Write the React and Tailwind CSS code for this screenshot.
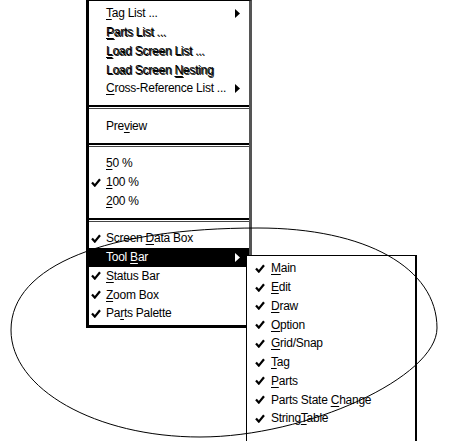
import React from 'react';

const mainGroups = [
  [
    { label: 'Tag List ...', arrow: true },
    { label: 'Parts List ...', dim: true },
    { label: 'Load Screen List ...', dim: true },
    { label: 'Load Screen Nesting', keyAt: 12, dim: true },
    { label: 'Cross-Reference List ...', arrow: true },
  ],
  [{ label: 'Preview', keyAt: 3 }],
  [
    { label: '50 %' },
    { label: '100 %', checked: true },
    { label: '200 %' },
  ],
  [
    { label: 'Screen Data Box', keyAt: 7, checked: true },
    { label: 'Tool Bar', keyAt: 5, active: true, arrow: true },
    { label: 'Status Bar', checked: true },
    { label: 'Zoom Box', checked: true },
    { label: 'Parts Palette', keyAt: 2, checked: true },
  ],
];

const toolBarItems = [
  { label: 'Main' },
  { label: 'Edit' },
  { label: 'Draw' },
  { label: 'Option' },
  { label: 'Grid/Snap' },
  { label: 'Tag' },
  { label: 'Parts' },
  { label: 'Parts State Change', keyAt: 12 },
  { label: 'StringTable', keyAt: 6 },
];

function Label({ text, keyAt = 0 }) {
  return (
    <span className="whitespace-pre">
      {text.slice(0, keyAt)}
      <u className="underline underline-offset-[2px]">{text[keyAt]}</u>
      {text.slice(keyAt + 1)}
    </span>
  );
}

function Check({ light }) {
  return (
    <svg width="10" height="9" viewBox="0 0 10 9" className="block">
      <path d="M1 4.5 L3.8 7.6 L9 1.2" fill="none" stroke={light ? '#fff' : '#000'} strokeWidth="2.2" />
    </svg>
  );
}

function Arrow({ light }) {
  return (
    <svg width="5" height="9" viewBox="0 0 5 9" className="block">
      <path d="M0 0 L5 4.5 L0 9 Z" fill={light ? '#fff' : '#000'} />
    </svg>
  );
}

function MenuRow({ item }) {
  const active = item.active;
  return (
    <div
      className={`flex h-[18.75px] items-center ${active ? 'bg-black text-white' : 'text-black'} ${
        item.dim ? 'text-[#8a8a8a] [text-shadow:1px_1px_0_#111]' : ''
      }`}
    >
      <div className="w-[17px] pl-[2px]">{item.checked ? <Check light={active} /> : null}</div>
      <div className="flex-1">
        <Label text={item.label} keyAt={item.keyAt ?? 0} />
      </div>
      <div className="w-[14px]">{item.arrow ? <Arrow light={active} /> : null}</div>
    </div>
  );
}

function Separator() {
  return (
    <div className="flex h-[18.75px] items-center">
      <div className="h-[4px] w-full border-t-2 border-b border-t-black border-b-[#444]" />
    </div>
  );
}

export default function App() {
  return (
    <div className="relative h-[441px] w-[449px] overflow-hidden bg-white font-['Liberation_Sans',Arial,sans-serif] text-[12px] leading-none tracking-[-0.25px]">
      <div className="flex items-start pl-[86px]">
        <div className="w-[166px] border-t border-l-[3px] border-r-[3px] border-b-[3px] border-l-black border-t-black border-r-[#555] border-b-black border-l-double border-b-double pt-[3px] pb-[2px]">
          {mainGroups.map((group, gi) => (
            <div key={gi}>
              {gi > 0 ? <Separator /> : null}
              {group.map((item) => (
                <MenuRow key={item.label} item={item} />
              ))}
            </div>
          ))}
        </div>
        <div className="-ml-[6px] mt-[255px] w-[171px] border-t border-l border-r-2 border-black bg-white pt-[3px] pb-[24px]">
          {toolBarItems.map((item) => (
            <div key={item.label} className="flex h-[18.75px] items-center">
              <div className="flex w-[24px] justify-center pl-[2px]">
                <Check />
              </div>
              <Label text={item.label} keyAt={item.keyAt ?? 0} />
            </div>
          ))}
        </div>
      </div>
      <svg className="pointer-events-none absolute left-0 top-0" width="449" height="441" viewBox="0 0 449 441">
        <path
          d="M11 330 C11 265 108 228 258 228 C366 228 437 268 437 328 C437 377 307 437 200 437 C96 437 11 389 11 330 Z"
          fill="none"
          stroke="#000"
          strokeWidth="1"
        />
      </svg>
    </div>
  );
}
